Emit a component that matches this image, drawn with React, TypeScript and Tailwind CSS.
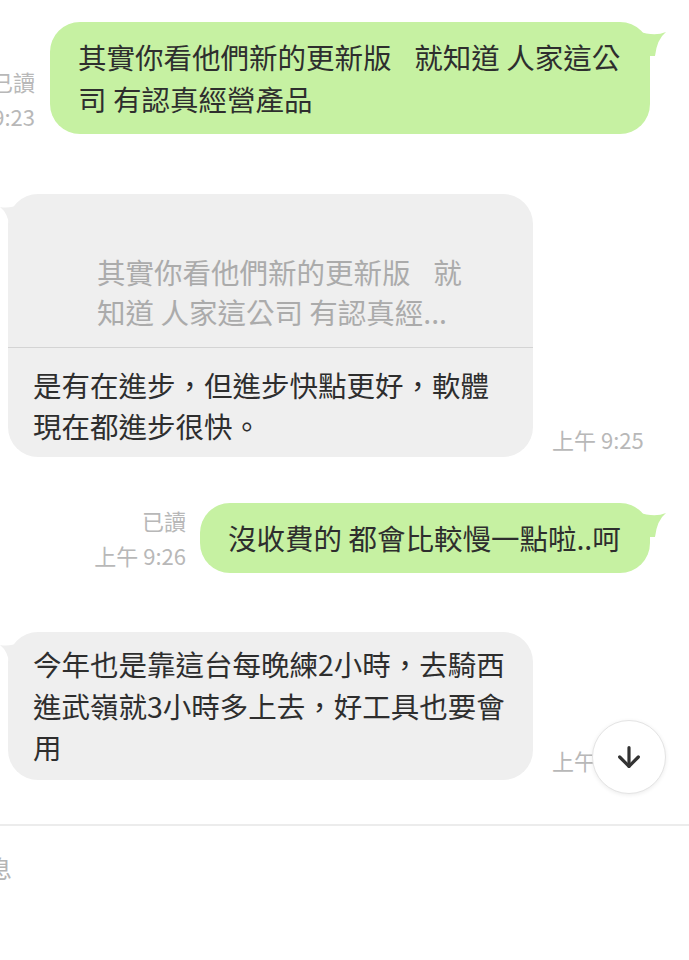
import React from "react";
import { ArrowDown } from "lucide-react";

const FONT = '"Noto Sans CJK TC", "Noto Sans CJK SC", "Noto Sans", sans-serif';

function GreenTail() {
  return (
    <svg
      className="absolute top-0 right-[-16px]"
      width="30"
      height="36"
      viewBox="0 0 30 36"
    >
      <path d="M2 9 Q18 15 30 10 Q21 17 19 34 L2 34 Z" fill="#c6f1a2" />
    </svg>
  );
}

function GrayTail() {
  return (
    <svg
      className="absolute top-0 left-[-8px]"
      width="30"
      height="36"
      viewBox="0 0 30 36"
    >
      <path d="M24 9 Q10 15 0 13 Q8 19 10 34 L24 34 Z" fill="#efefef" />
    </svg>
  );
}

function Gap() {
  return <span className="inline-block w-[10px]" />;
}

export default function App() {
  return (
    <div
      className="relative w-full h-[960px] overflow-hidden bg-white text-[#2e2e2e]"
      style={{ fontFamily: FONT }}
    >
      {/* Row 1 outgoing */}
      <div className="flex justify-end items-end gap-[15px] pr-[39px] pt-[22px]">
        <div className="flex flex-col items-end shrink-0 whitespace-nowrap text-[22px] leading-[35px] text-[#b8b8b8]">
          <span>已讀</span>
          <span>上午 9:23</span>
        </div>
        <div className="relative shrink-0 w-[600px] rounded-[30px] bg-[#c6f1a2] px-[28px] py-[14px] text-[28.5px] leading-[42px] whitespace-pre">
          <GreenTail />
          <div className="relative">
            其實你看他們新的更新版  <Gap />就知道 人家這公
            <br />
            司 有認真經營產品
          </div>
        </div>
      </div>

      {/* Row 2 incoming with quote */}
      <div className="flex items-end gap-[19px] pl-[8px] mt-[60px]">
        <div className="relative shrink-0 w-[525px] rounded-[30px] bg-[#efefef]">
          <GrayTail />
          <div className="relative border-b border-[#d4d4d4] pt-[58px] pb-[15px] pl-[89px] text-[28.5px] leading-[40px] text-[#ababab] whitespace-pre">
            其實你看他們新的更新版  <Gap />就
            <br />
            知道 人家這公司 有認真經...
          </div>
          <div className="relative px-[25px] pt-[16px] pb-[11px] text-[28.5px] leading-[41px]">
            是有在進步，但進步快點更好，軟體
            <br />
            現在都進步很快。
          </div>
        </div>
        <div className="shrink-0 whitespace-nowrap text-[22px] leading-[35px] text-[#b8b8b8]">
          上午 9:25
        </div>
      </div>

      {/* Row 3 outgoing */}
      <div className="flex justify-end items-end gap-[14px] pr-[39px] mt-[46px]">
        <div className="flex flex-col items-end shrink-0 whitespace-nowrap text-[22px] leading-[35px] text-[#b8b8b8]">
          <span>已讀</span>
          <span>上午 9:26</span>
        </div>
        <div className="relative shrink-0 w-[450px] rounded-[30px] bg-[#c6f1a2] px-[28px] py-[14px] text-[28.5px] leading-[42px] whitespace-pre">
          <GreenTail />
          <div className="relative">沒收費的 都會比較慢一點啦..呵</div>
        </div>
      </div>

      {/* Row 4 incoming */}
      <div className="flex items-end gap-[19px] pl-[8px] mt-[59px]">
        <div className="relative shrink-0 w-[525px] rounded-[30px] bg-[#efefef] px-[25px] pt-[11px] pb-[12px] text-[28.5px] leading-[41.5px]">
          <GrayTail />
          <div className="relative">
            今年也是靠這台每晚練2小時，去騎西
            <br />
            進武嶺就3小時多上去，好工具也要會
            <br />用
          </div>
        </div>
        <div className="shrink-0 whitespace-nowrap text-[22px] leading-[35px] text-[#b8b8b8] pb-[2px]">
          上午 9:27
        </div>
      </div>

      {/* Input area */}
      <div className="mt-[44px] border-t-2 border-[#ececec] pt-[26px]">
        <div className="ml-[-84px] text-[24px] leading-[32px] text-[#b4b4b4] whitespace-nowrap">
          輸入訊息
        </div>
      </div>

      {/* Scroll-down button */}
      <button className="absolute left-[592px] top-[720px] w-[74px] h-[74px] rounded-full bg-white border border-[#e4e4e4] shadow-[0_1px_4px_rgba(0,0,0,0.08)] flex items-center justify-center">
        <ArrowDown size={32} strokeWidth={2.4} color="#333333" />
      </button>
    </div>
  );
}
